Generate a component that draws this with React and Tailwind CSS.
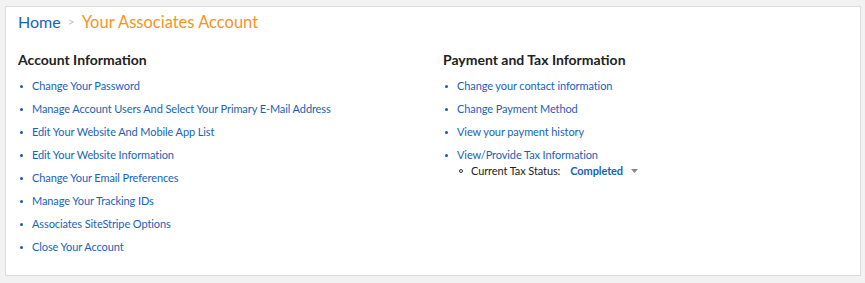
import React from 'react';

const accountLinks = [
  'Change Your Password',
  'Manage Account Users And Select Your Primary E-Mail Address',
  'Edit Your Website And Mobile App List',
  'Edit Your Website Information',
  'Change Your Email Preferences',
  'Manage Your Tracking IDs',
  'Associates SiteStripe Options',
  'Close Your Account',
];

const paymentLinks = [
  'Change your contact information',
  'Change Payment Method',
  'View your payment history',
];

function LinkItem({ children }) {
  return (
    <li className="flex items-center h-[23px]">
      <span className="w-[3px] h-[3px] rounded-full bg-[#1a5aa6] ml-[2px] mr-[9px]" />
      <a href="#" className="text-[#1863b8] hover:underline">{children}</a>
    </li>
  );
}

export default function App() {
  return (
    <div
      className="min-h-screen bg-[#f2f2f2] pt-[6px] px-[5px] text-[11px] tracking-[-0.1px]"
      style={{ fontFamily: 'Lato, "Open Sans", sans-serif' }}
    >
      <div className="w-[856px] h-[270px] bg-white border border-[#dcdcdc] px-3 pt-[3px]">
        {/* breadcrumb */}
        <div className="flex items-center h-[24px] text-[16px] tracking-normal">
          <a href="#" className="text-[#1863b8]">Home</a>
          <span className="mx-[7px] text-[#c2c2c2] text-[12px]">&gt;</span>
          <span className="text-[#f7941d] text-[16.5px]">Your Associates Account</span>
        </div>

        <div className="grid grid-cols-2 gap-x-5 mt-[16px]">
          <section>
            <h2 className="font-bold text-[14px] leading-[20px] text-[#222] tracking-normal">Account Information</h2>
            <ul className="mt-[5px]">
              {accountLinks.map((l) => (
                <LinkItem key={l}>{l}</LinkItem>
              ))}
            </ul>
          </section>

          <section>
            <h2 className="font-bold text-[14px] leading-[20px] text-[#222] tracking-normal">Payment and Tax Information</h2>
            <ul className="mt-[5px]">
              {paymentLinks.map((l) => (
                <LinkItem key={l}>{l}</LinkItem>
              ))}
              <LinkItem>View/Provide Tax Information</LinkItem>
              <li className="flex items-center h-[8px] ml-[16px]">
                <span className="w-[4px] h-[4px] rounded-full border border-[#333] mr-[8px]" />
                <span className="text-[#222]">Current Tax Status:</span>
                <a href="#" className="ml-[10px] font-bold text-[#1863b8]">Completed</a>
                <svg width="7" height="4" viewBox="0 0 7 4" className="ml-[8px]">
                  <path d="M0 0 L7 0 L3.5 4 Z" fill="#888" />
                </svg>
              </li>
            </ul>
          </section>
        </div>
      </div>
    </div>
  );
}
